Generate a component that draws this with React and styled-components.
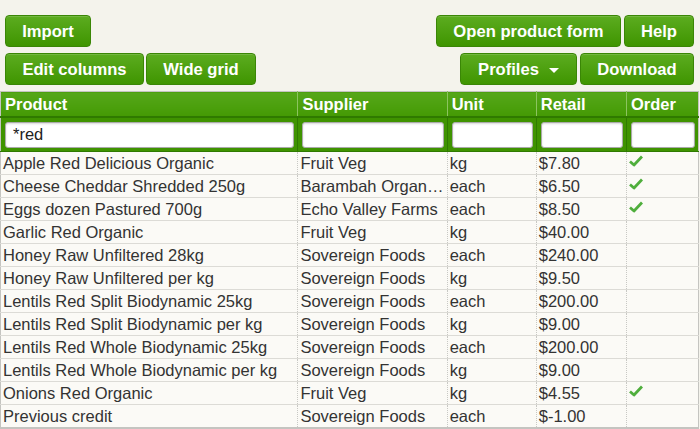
import React from 'react'
import styled, { createGlobalStyle } from 'styled-components'

const Global = createGlobalStyle`
    body {
        margin: 0;
        background: #f4f3ec;
        font-family: 'Liberation Sans', Arial, sans-serif;
    }
`

const Page = styled.div`
    padding: 15px 6px 0 0;
    width: 700px;
    box-sizing: border-box;
`

const Toolbar = styled.div`
    display: flex;
    justify-content: space-between;
    padding-left: 5px;
    margin-bottom: 6px;
`

const Group = styled.div`
    display: flex;
    gap: ${p => p.gap || 2}px;
`

const Button = styled.button`
    box-sizing: border-box;
    height: 32px;
    width: ${p => p.w}px;
    padding: 1px 0 0;
    border: 1px solid #3a8606;
    border-radius: 4px;
    background: linear-gradient(#5cac20, #3f9500);
    color: #fff;
    font-family: 'Liberation Sans', Arial, sans-serif;
    font-weight: bold;
    font-size: 16.6px;
    display: flex;
    align-items: center;
    justify-content: center;
    gap: 10px;
    box-shadow: inset 0 1px 0 rgba(255, 255, 255, 0.15);
`

const Caret = styled.span`
    width: 0;
    height: 0;
    border-left: 5px solid transparent;
    border-right: 5px solid transparent;
    border-top: 5px solid #fff;
    margin-top: 1px;
`

const Grid = styled.table`
    margin-top: 4px;
    width: 699px;
    border-collapse: collapse;
    table-layout: fixed;
    border: 1px solid #c4c4c0;
    border-bottom-width: 2px;
    background: #fbfaf6;
    font-size: 16.5px;
    color: #333;
`

const Head = styled.th`
    height: 24px;
    padding: 0 4px;
    text-align: left;
    color: #fff;
    font-weight: bold;
    background: linear-gradient(#56a71a, #449a04);
    border-left: 1px solid #8cc460;
    border-bottom: 2px solid #2f7a00;
    &:first-child { border-left: none; }
`

const FilterCell = styled.td`
    height: 33px;
    padding: 0 3px 0 4px;
    background: #3f9300;
    border-left: 1px solid #2f7a00;
    border-bottom: 1px solid #2f7a00;
    &:first-child { border-left: none; }
`

const FilterInput = styled.input`
    box-sizing: border-box;
    width: 100%;
    height: 26px;
    border: 1px solid #aaa;
    border-radius: 3px;
    background: #fff;
    box-shadow: inset 0 1px 2px rgba(0, 0, 0, 0.15);
    padding: 0 7px;
    font-family: 'Liberation Sans', Arial, sans-serif;
    font-size: 16.5px;
    color: #222;
    outline: none;
`

const Cell = styled.td`
    height: 22px;
    padding: 0 2px;
    white-space: nowrap;
    overflow: hidden;
    text-overflow: ellipsis;
    border-left: 1px dotted #c8c8c4;
    border-bottom: 1px solid #dcdbd6;
    &:first-child { border-left: none; }
`

const Check = () => (
    <svg width="14" height="12" viewBox="0 0 14 12" style={{ display: 'block', marginTop: -4 }}>
        <path d="M1 6.5 L5 10 L13 1.5" fill="none" stroke="#4fae3c" strokeWidth="2.8" strokeLinejoin="round" />
    </svg>
)

const rows = [
    ['Apple Red Delicious Organic', 'Fruit Veg', 'kg', '$7.80', true],
    ['Cheese Cheddar Shredded 250g', 'Barambah Organics', 'each', '$6.50', true],
    ['Eggs dozen Pastured 700g', 'Echo Valley Farms', 'each', '$8.50', true],
    ['Garlic Red Organic', 'Fruit Veg', 'kg', '$40.00', false],
    ['Honey Raw Unfiltered 28kg', 'Sovereign Foods', 'each', '$240.00', false],
    ['Honey Raw Unfiltered per kg', 'Sovereign Foods', 'kg', '$9.50', false],
    ['Lentils Red Split Biodynamic 25kg', 'Sovereign Foods', 'each', '$200.00', false],
    ['Lentils Red Split Biodynamic per kg', 'Sovereign Foods', 'kg', '$9.00', false],
    ['Lentils Red Whole Biodynamic 25kg', 'Sovereign Foods', 'each', '$200.00', false],
    ['Lentils Red Whole Biodynamic per kg', 'Sovereign Foods', 'kg', '$9.00', false],
    ['Onions Red Organic', 'Fruit Veg', 'kg', '$4.55', true],
    ['Previous credit', 'Sovereign Foods', 'each', '$-1.00', false]
]

const columns = [
    ['Product', 297],
    ['Supplier', 149],
    ['Unit', 89],
    ['Retail', 90],
    ['Order', 72]
]

export default function App() {
    return (
        <Page>
            <Global />
            <Toolbar>
                <Group>
                    <Button w={86}>Import</Button>
                </Group>
                <Group gap={3}>
                    <Button w={185}>Open product form</Button>
                    <Button w={70}>Help</Button>
                </Group>
            </Toolbar>
            <Toolbar>
                <Group>
                    <Button w={139}>Edit columns</Button>
                    <Button w={110}>Wide grid</Button>
                </Group>
                <Group gap={3}>
                    <Button w={117}>
                        Profiles <Caret />
                    </Button>
                    <Button w={114}>Download</Button>
                </Group>
            </Toolbar>
            <Grid>
                <colgroup>
                    {columns.map(([name, w]) => (
                        <col key={name} style={{ width: w }} />
                    ))}
                </colgroup>
                <thead>
                    <tr>
                        {columns.map(([name]) => (
                            <Head key={name}>{name}</Head>
                        ))}
                    </tr>
                    <tr>
                        {columns.map(([name], i) => (
                            <FilterCell key={name}>
                                <FilterInput defaultValue={i === 0 ? '*red' : ''} />
                            </FilterCell>
                        ))}
                    </tr>
                </thead>
                <tbody>
                    {rows.map(([product, supplier, unit, retail, order]) => (
                        <tr key={product}>
                            <Cell>{product}</Cell>
                            <Cell>{supplier}</Cell>
                            <Cell>{unit}</Cell>
                            <Cell>{retail}</Cell>
                            <Cell>{order && <Check />}</Cell>
                        </tr>
                    ))}
                </tbody>
            </Grid>
        </Page>
    )
}
